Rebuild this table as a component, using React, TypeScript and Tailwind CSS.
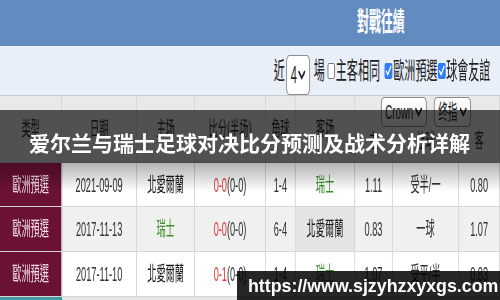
import React from "react";

const COLS = "grid grid-cols-[135px_163px_126px_154px_65px_129px_82px_144px_89px]";

function Chevron() {
  return (
    <svg width="16" height="10" viewBox="0 0 16 10">
      <path d="M2 2 L8 8 L14 2" fill="none" stroke="#222" strokeWidth="3" strokeLinecap="round" strokeLinejoin="round" />
    </svg>
  );
}

function Box({ checked }: { checked?: boolean }) {
  if (checked) {
    return (
      <span className="flex h-[16px] w-[17px] items-center justify-center rounded-[3px] bg-[#2f7cf6]">
        <svg width="15" height="13" viewBox="0 0 15 13">
          <path d="M2 6.5 L6 10.5 L13 2" fill="none" stroke="white" strokeWidth="2.4" />
        </svg>
      </span>
    );
  }
  return <span className="block h-[16px] w-[16px] rounded-[3px] border-x-2 border-y border-[#777] bg-white" />;
}

type Row = {
  date: string;
  home: string;
  homeGreen?: boolean;
  score: string;
  half: string;
  corner: string;
  away: string;
  awayGreen?: boolean;
  awayShade?: boolean;
  h: string;
  line: string;
  a: string;
  bg: string;
  height: string;
};

const rows: Row[] = [
  { date: "2021-09-09", home: "北愛爾蘭", score: "0-0", half: "(0-0)", corner: "1-4", away: "瑞士", awayGreen: true, h: "1.11", line: "受半/一", a: "0.80", bg: "bg-white", height: "h-[44px]" },
  { date: "2017-11-13", home: "瑞士", homeGreen: true, score: "0-0", half: "(0-0)", corner: "6-4", away: "北愛爾蘭", awayShade: true, h: "0.83", line: "一球", a: "1.07", bg: "bg-[#f0f0f0]", height: "h-[45px]" },
  { date: "2017-11-10", home: "北愛爾蘭", score: "0-1", half: "(0-0)", corner: "1-4", away: "瑞士", awayGreen: true, h: "1.07", line: "受平/半", a: "0.83", bg: "bg-white", height: "h-[45px]" },
];

const cell = "flex items-center justify-center border-r-2 border-[#d6d6d6]";

export default function App() {
  return (
    <div className="relative h-[300px] w-[500px] overflow-hidden bg-white">
      <div className="w-[1087px] origin-top-left scale-x-[0.46] font-['Liberation_Sans','Noto_Sans_CJK_TC',sans-serif]">
        <div className="flex h-[46px] items-center bg-[#628bbf] pb-[2px] pl-[776px]">
          <span className="text-[26px] font-bold leading-none text-white">對戰往績</span>
        </div>
        <div className="flex h-[50px] items-center justify-end border-b border-[#c6c9ce] bg-[#e8eff9] pr-[21px] text-[24px] leading-none text-[#222]">
          <span>近</span>
          <span className="ml-[3px] flex h-[40px] w-[52px] items-center justify-center gap-[3px] self-end rounded-[7px] border-x-2 border-y border-[#8d8d8d] bg-white">
            <span>4</span>
            <Chevron />
          </span>
          <span className="ml-[8px]">場</span>
          <span className="ml-[6px]"><Box /></span>
          <span className="ml-[2px]">主客相同</span>
          <span className="ml-[10px]"><Box checked /></span>
          <span className="ml-[2px]">歐洲預選</span>
          <span className="ml-[1px]"><Box checked /></span>
          <span className="ml-[1px]">球會友誼</span>
        </div>
        <div className={`${COLS} relative h-[67px] border-b border-[#d6d6d6] bg-[#e9e9e9] text-[20px] text-[#333] font-['Liberation_Sans','Noto_Sans_CJK_SC',sans-serif]`}>
          <div className={cell}>类型</div>
          <div className={cell}>日期</div>
          <div className={cell}>主场</div>
          <div className={cell}>比分(半场)</div>
          <div className={cell}>角球</div>
          <div className={cell}>客场</div>
          <div className={`${cell} items-end pb-[6px]`}>主</div>
          <div className={`${cell} items-end pb-[6px]`}>让球</div>
          <div className={`${cell} items-end pb-[6px]`}>客</div>
          <div className="absolute left-[828px] top-[1px] flex h-[30px] w-[100px] items-center justify-center gap-[4px] rounded-[7px] border-x-2 border-y border-[#8a8a8a] bg-gradient-to-b from-white to-[#ececec] text-[21px] text-[#222]">
            <span>Crown</span>
            <Chevron />
          </div>
          <div className="absolute left-[943px] top-[1px] flex h-[30px] w-[81px] items-center justify-center gap-[4px] rounded-[7px] border-x-2 border-y border-[#8a8a8a] bg-gradient-to-b from-white to-[#ececec] text-[21px] text-[#222]">
            <span>终指</span>
            <Chevron />
          </div>
        </div>
        {rows.map((r) => (
          <div key={r.date} className={`${COLS} ${r.height} border-b border-[#d6d6d6] ${r.bg} text-[20px] text-[#333]`}>
            <div className={`${cell} bg-[#6b1136] text-[#f2dce6]`}>歐洲預選</div>
            <div className={cell}>{r.date}</div>
            <div className={`${cell} ${r.homeGreen ? "text-[#3f9130]" : "text-[#1a1a1a]"}`}>{r.home}</div>
            <div className={cell}>
              <span className="text-[#e53935]">{r.score}</span>
              <span>{r.half}</span>
            </div>
            <div className={cell}>{r.corner}</div>
            <div className={`${cell} ${r.awayGreen ? "text-[#3f9130]" : "text-[#1a1a1a]"} ${r.awayShade ? "bg-[#e4e4e4]" : ""}`}>{r.away}</div>
            <div className={cell}>{r.h}</div>
            <div className={cell}>{r.line}</div>
            <div className={cell}>{r.a}</div>
          </div>
        ))}
        <div className={`${COLS} h-[10px] bg-[#e6e6e6]`}>
          <div className="bg-[#3f9ca2]" />
        </div>
      </div>

      <div className="absolute left-0 right-0 top-[110px] flex h-[53px] items-center bg-black/65 pl-[29px] pt-[11px] font-['Noto_Sans_CJK_SC',sans-serif] text-[21px] font-bold leading-none text-white">
        爱尔兰与瑞士足球对决比分预测及战术分析详解
      </div>
      <div className="absolute left-0 right-0 top-[163px] h-[28px] bg-gradient-to-b from-black/30 to-transparent" />

      <div className="absolute bottom-0 left-[237px] right-0 top-[271px] flex items-center bg-black/85 pl-[11px] pt-[3px] font-['Liberation_Sans',sans-serif] text-[17.8px] font-bold leading-none text-white">
        https://www.sjzyhzxyxgs.com
      </div>
    </div>
  );
}
